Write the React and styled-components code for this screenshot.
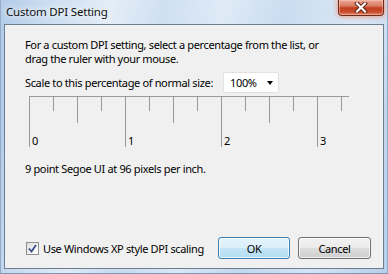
import styled, { createGlobalStyle } from "styled-components";

const Global = createGlobalStyle`
  html, body {
    margin: 0;
    padding: 0;
  }
  body {
    width: 388px;
    height: 274px;
    overflow: hidden;
    font-family: "Noto Sans", "DejaVu Sans", sans-serif;
    color: #000;
  }
`;

const Frame = styled.div`
  position: relative;
  width: 388px;
  height: 274px;
  box-sizing: border-box;
  display: flex;
  flex-direction: column;
  padding: 0 4px 5px 4px;
  background:
    linear-gradient(180deg, rgba(255, 255, 255, 0.15) 0%, rgba(255, 255, 255, 0) 40%),
    linear-gradient(
      100deg,
      #a6c3e4 0%,
      #c4d9ef 12%,
      #dfeaf6 26%,
      #c8dbf0 38%,
      #d9e7f5 52%,
      #c2d7ee 66%,
      #d4e4f4 82%,
      #b7cfea 100%
    );
  box-shadow: inset 0 -1px #7f95b2, inset 1px 0 #93abc9, inset -1px 0 #93abc9;
`;

const TitleBar = styled.div`
  height: 24px;
  display: flex;
  align-items: flex-start;
`;

const Title = styled.span`
  margin: 4px 0 0 2px;
  font-size: 11.5px;
  line-height: 15px;
  letter-spacing: -0.2px;
  color: #111;
  text-shadow: 0 0 6px #fff, 0 0 10px #fff;
`;

const CloseButton = styled.div`
  margin-left: auto;
  width: 46px;
  height: 16px;
  box-sizing: border-box;
  border: 1px solid #6d2a1d;
  border-top: none;
  border-radius: 0 0 4px 4px;
  background: linear-gradient(
    180deg,
    #e9a996 0%,
    #d97a62 40%,
    #c4401f 52%,
    #c84a2c 78%,
    #e58a6a 100%
  );
  box-shadow: 0 0 5px 1px rgba(240, 140, 110, 0.8), inset 0 0 0 1px rgba(255, 210, 190, 0.45);
  display: flex;
  align-items: center;
  justify-content: center;
`;

const Client = styled.div`
  flex: 1;
  display: flex;
  flex-direction: column;
  background: #f0f0f0;
  border: 1px solid #6c7c91;
  padding: 0 0 0 20px;
  font-size: 11px;
  letter-spacing: -0.35px;
`;

const Intro = styled.p`
  margin: 13px 0 0 0;
  line-height: 14px;
`;

const ScaleRow = styled.div`
  display: flex;
  align-items: center;
  margin-top: 6px;
  height: 21px;
`;

const Label = styled.span`
  width: 198px;
  white-space: nowrap;
  line-height: 14px;
`;

const Select = styled.div`
  width: 56px;
  height: 21px;
  box-sizing: border-box;
  background: #fff;
  border: 1px solid #e2e2e2;
  border-radius: 2px;
  display: flex;
  align-items: center;
  padding: 0 5px 0 6px;
`;

const Caret = styled.span`
  margin-left: auto;
  width: 0;
  height: 0;
  border-left: 3.5px solid transparent;
  border-right: 3.5px solid transparent;
  border-top: 4px solid #000;
`;

const Ruler = styled.svg`
  display: block;
  margin: 3px 0 0 4px;
  overflow: visible;
`;

const FontInfo = styled.p`
  margin: 14px 0 0 0;
  line-height: 14px;
`;

const Bottom = styled.div`
  margin-top: auto;
  display: flex;
  align-items: center;
  padding: 0 12px 9px 1px;
`;

const CheckLabel = styled.label`
  display: flex;
  align-items: center;
  gap: 4px;
  margin-right: auto;
`;

const Box = styled.span`
  width: 13px;
  height: 13px;
  box-sizing: border-box;
  border: 1px solid #8e8f8f;
  background: linear-gradient(135deg, #dcdcdc 0%, #f4f4f4 60%, #ffffff 100%);
  display: flex;
  align-items: center;
  justify-content: center;
`;

const Button = styled.div`
  width: ${(p) => p.$w}px;
  height: 22px;
  box-sizing: border-box;
  margin-left: ${(p) => p.$ml}px;
  border-radius: 3px;
  border: 1px solid ${(p) => (p.$primary ? "#3c7fb1" : "#707070")};
  background: ${(p) =>
    p.$primary
      ? "linear-gradient(180deg, #e5f4fc 0%, #dbeffa 48%, #c4e5f6 52%, #b3dcf1 100%)"
      : "linear-gradient(180deg, #f2f2f2 0%, #ebebeb 48%, #dddddd 52%, #cfcfcf 100%)"};
  box-shadow: inset 0 0 0 1px rgba(255, 255, 255, 0.65);
  display: flex;
  align-items: center;
  justify-content: center;
`;

const quarter = [24, 72, 120, 168, 216, 264, 312];
const half = [48, 144, 240];
const major = [0, 96, 192, 288];

export default function App() {
  return (
    <>
      <Global />
      <Frame>
        <TitleBar>
          <Title>Custom DPI Setting</Title>
          <CloseButton>
            <svg width="14" height="11" viewBox="0 0 14 11">
              <path
                d="M3 1.5 L11 9.5 M11 1.5 L3 9.5"
                stroke="#5a1e12"
                strokeWidth="4"
                strokeLinecap="square"
              />
              <path
                d="M3 1.5 L11 9.5 M11 1.5 L3 9.5"
                stroke="#fff"
                strokeWidth="2.2"
                strokeLinecap="square"
              />
            </svg>
          </CloseButton>
        </TitleBar>
        <Client>
          <Intro>
            For a custom DPI setting, select a percentage from the list, or
            <br />
            drag the ruler with your mouse.
          </Intro>
          <ScaleRow>
            <Label>Scale to this percentage of normal size:</Label>
            <Select>
              100%
              <Caret />
            </Select>
          </ScaleRow>
          <Ruler width="320" height="52" viewBox="0 0 320 52">
            <g stroke="#9a9a9a" strokeWidth="1" shapeRendering="crispEdges">
              <line x1="0" y1="0.5" x2="320" y2="0.5" />
              {major.map((x) => (
                <line key={x} x1={x + 0.5} y1="0" x2={x + 0.5} y2="51" />
              ))}
              {half.map((x) => (
                <line key={x} x1={x + 0.5} y1="0" x2={x + 0.5} y2="27" />
              ))}
              {quarter.map((x) => (
                <line key={x} x1={x + 0.5} y1="0" x2={x + 0.5} y2="15" />
              ))}
            </g>
            {major.map((x, i) => (
              <text
                key={x}
                x={x + 3}
                y="49"
                fontSize="11"
                fontFamily='"Noto Sans", sans-serif'
                fill="#000"
              >
                {i}
              </text>
            ))}
          </Ruler>
          <FontInfo>9 point Segoe UI at 96 pixels per inch.</FontInfo>
          <Bottom>
            <CheckLabel>
              <Box>
                <svg width="9" height="9" viewBox="0 0 9 9">
                  <path
                    d="M1 4.5 L3.5 7.5 L8 1"
                    fill="none"
                    stroke="#3a4f8c"
                    strokeWidth="1.8"
                  />
                </svg>
              </Box>
              Use Windows XP style DPI scaling
            </CheckLabel>
            <Button $primary $w={72} $ml={0}>
              OK
            </Button>
            <Button $w={73} $ml={8}>
              Cancel
            </Button>
          </Bottom>
        </Client>
      </Frame>
    </>
  );
}
